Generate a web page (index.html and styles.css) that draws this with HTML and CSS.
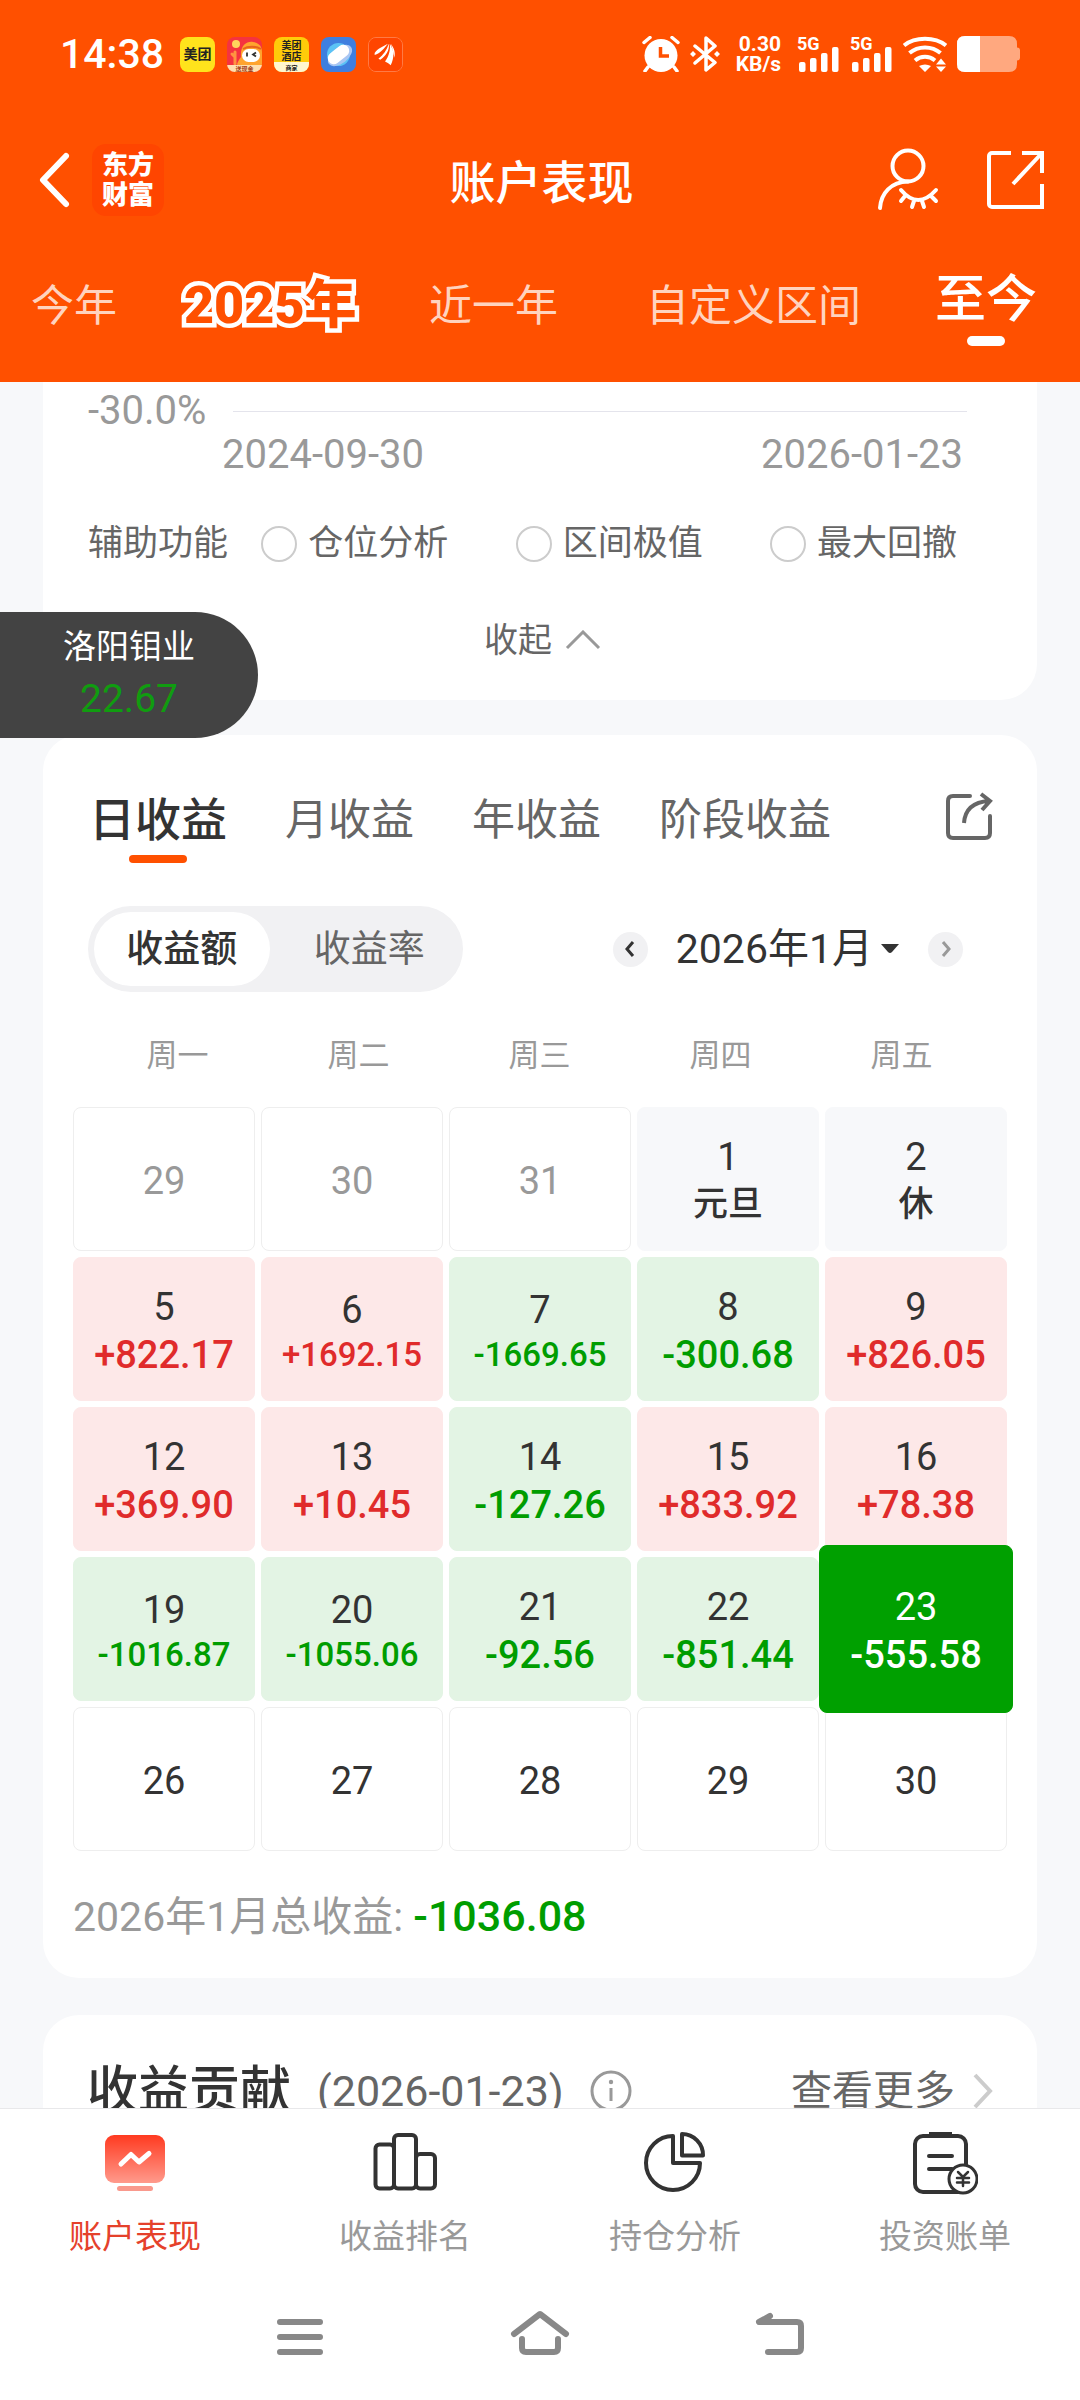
FILE: index.html
```html
<!DOCTYPE html>
<html lang="zh-CN">
<head>
<meta charset="utf-8">
<meta name="viewport" content="width=device-width, initial-scale=1">
<title>账户表现</title>
<link rel="stylesheet" href="styles.css">
</head>
<body>
<div class="app">
  <header class="header">
    <div class="status">
      <span class="clock">14:38</span>
      <div class="status-apps">
        <span class="app-icon app-meituan">美团</span>
        <svg class="app-icon" viewBox="0 0 35 35" aria-hidden="true">
          <rect width="35" height="35" fill="#f5333f"/>
          <path d="M14 20C13 8 20 4 26 5c7 1 9 5 9 10v14H10c0-4 2-6 4-9z" fill="#ffa42e"/>
          <path d="M16 12c5-3 13-3 18 0" fill="none" stroke="#e8641b" stroke-width="2"/>
          <circle cx="9" cy="7" r="4" fill="#ffd45c"/>
          <path d="M8 15v12M5 17l3 3" stroke="#ff9440" stroke-width="3" stroke-linecap="round"/>
          <rect x="15" y="12" width="18" height="13" rx="6.500" fill="#fff"/>
          <path d="M20 15.500v4M29 15.500l-3 2 3 2" fill="none" stroke="#333" stroke-width="1.800"/>
          <path d="M0 28h35v7H0z" fill="#ffe0b0"/>
          <text x="17.500" y="34" class="tiny-red">送现金</text>
        </svg>
        <span class="app-icon app-hotel"><span>美团</span><span>酒店</span><span class="app-hotel-foot">商家</span></span>
        <svg class="app-icon" viewBox="0 0 35 35" aria-hidden="true">
          <rect width="35" height="35" fill="#3f7fdf"/>
          <circle cx="17.500" cy="17.500" r="11.500" fill="#5cc3f5"/>
          <ellipse cx="19" cy="18.500" rx="14" ry="8" transform="rotate(-38 19 18.500)" fill="#a9c6f3"/>
          <rect x="5.500" y="11.500" width="24" height="12" rx="6" transform="rotate(-38 17.500 17.500)" fill="#fff"/>
        </svg>
        <svg class="app-icon app-outlined" viewBox="0 0 35 35" aria-hidden="true">
          <rect width="35" height="35" fill="#ff4500"/>
          <path d="M6 16C9 11 15 9 20 6 16 11 12 16 6 18zM10 22c5-4 9-9 11-16 1 7-3 13-9 17zM17 25c4-6 6-12 5-19 5 8 5 14 1 23-2-2-4-3-6-4zM23 6c4 5 5 9 4 15-1-5-2-10-4-15z" fill="#fff"/>
        </svg>
      </div>
      <div class="status-right">
        <svg width="38" height="36" viewBox="0 0 38 36" aria-label="闹钟">
          <circle cx="19" cy="19.500" r="16.500" fill="#fff"/>
          <path d="M2 6.500 8 1.500M36 6.500 30 1.500M6 31l-3 4M32 31l3 4" stroke="#fff" stroke-width="3.500" stroke-linecap="round"/>
          <path d="M18.500 11v9h8.500" fill="none" stroke="#ff5000" stroke-width="3.500"/>
        </svg>
        <svg width="30" height="36" viewBox="0 0 30 36" aria-label="蓝牙">
          <path d="M5 10 25 26.500 16 34V2l9 8L5 27" fill="none" stroke="#fff" stroke-width="3.500" stroke-linejoin="round" stroke-linecap="round"/>
          <path d="M0 18l3-3 3 3-3 3zM24 18l3-3 3 3-3 3z" fill="#fff"/>
        </svg>
        <div class="net-speed"><span>0.30</span><span>KB/s</span></div>
        <svg class="signal" width="43" height="36" viewBox="0 0 43 36" aria-label="信号">
          <text x="0" y="14" class="sig">5G</text>
          <g fill="#fff"><rect x="2" y="26" width="6.500" height="10" rx="2"/><rect x="13" y="22" width="6.500" height="14" rx="2"/><rect x="24" y="17" width="6.500" height="19" rx="2"/><rect x="35" y="11" width="6.500" height="25" rx="2"/></g>
        </svg>
        <svg class="signal" width="43" height="36" viewBox="0 0 43 36" aria-label="信号">
          <text x="0" y="14" class="sig">5G</text>
          <g fill="#fff"><rect x="2" y="26" width="6.500" height="10" rx="2"/><rect x="13" y="22" width="6.500" height="14" rx="2"/><rect x="24" y="17" width="6.500" height="19" rx="2"/><rect x="35" y="11" width="6.500" height="25" rx="2"/></g>
        </svg>
        <svg width="44" height="36" viewBox="0 0 44 36" aria-label="无线网络">
          <g fill="none" stroke="#fff" stroke-width="4"><path d="M1 9.500C12 .500 32 .500 43 9.500"/><path d="M6.500 17C15 9.500 29 9.500 37.500 17"/><path d="M12 24.500c6-5 14-5 20 0"/></g>
          <path d="M16 30q6-3 12 0l-6 6zM33 28.500l5-6 5 6zM33 30.500h10l-5 5.500z" fill="#fff"/>
        </svg>
        <svg width="63" height="36" viewBox="0 0 63 36" aria-label="电量">
          <path d="M8 0H52q8 0 8 8v3.500q3 0 3 3v7q0 3-3 3V28q0 8-8 8H8q-8 0-8-8V8Q0 0 8 0z" fill="#ffa87f"/>
          <path d="M8 0H23V36H8q-8 0-8-8V8Q0 0 8 0z" fill="#fff"/>
        </svg>
      </div>
    </div>

    <div class="title-row">
      <div class="title-left">
        <button class="icon-btn" aria-label="返回">
          <svg width="34" height="58" viewBox="0 0 34 58"><path d="M28 5 5 29 28 53" fill="none" stroke="#fff" stroke-width="6" stroke-linecap="round" stroke-linejoin="round"/></svg>
        </button>
        <span class="brand"><span>东方</span><span>财富</span></span>
      </div>
      <h1 class="title">账户表现</h1>
      <div class="title-right">
        <button class="icon-btn" aria-label="隐藏账户">
          <svg width="64" height="66" viewBox="0 0 64 66" fill="none" stroke="#fff" stroke-width="4" stroke-linecap="round"><circle cx="32" cy="19" r="15.500"/><path d="M4 61C5 46 15 35 32 34.500M25 43Q42 63 60 43M29 49l-4 5M38 54l-2 6M46 54l2 6M55 49l5 5"/></svg>
        </button>
        <button class="icon-btn" aria-label="分享">
          <svg width="60" height="62" viewBox="0 0 60 62" fill="none" stroke="#fff" stroke-width="4"><path d="M26 4H7a3 3 0 0 0-3 3V55a3 3 0 0 0 3 3H57V35M37 4H57V24M57 4 28 35"/></svg>
        </button>
      </div>
    </div>

    <nav class="ranges">
      <button class="range">今年</button>
      <button class="range range-art">2025年</button>
      <button class="range">近一年</button>
      <button class="range">自定义区间</button>
      <button class="range range-active">至今</button>
    </nav>
  </header>

  <main class="main">
    <section class="card chart-card">
      <div class="axis"><span>-30.0%</span><i class="axis-line"></i></div>
      <div class="dates"><span>2024-09-30</span><span>2026-01-23</span></div>
      <div class="aux">
        <span class="aux-title">辅助功能</span>
        <label class="aux-opt"><input type="radio" name="aux">仓位分析</label>
        <label class="aux-opt"><input type="radio" name="aux">区间极值</label>
        <label class="aux-opt"><input type="radio" name="aux">最大回撤</label>
      </div>
      <button class="collapse">收起
        <svg width="36" height="20" viewBox="0 0 36 20"><path d="M2 18 18 2 34 18" fill="none" stroke="#999" stroke-width="3"/></svg>
      </button>
    </section>

    <section class="card income-card">
      <div class="income-head">
        <div class="tabs">
          <button class="tab tab-active">日收益</button>
          <button class="tab">月收益</button>
          <button class="tab">年收益</button>
          <button class="tab">阶段收益</button>
        </div>
        <button class="icon-btn share" aria-label="分享收益">
          <svg width="50" height="50" viewBox="0 0 50 50" fill="none" stroke="#666" stroke-width="4"><path d="M26 4H9Q4 4 4 9V41q0 5 5 5H41q5 0 5-5V24" stroke-linecap="round"/><path d="M20 31C21 17 29 10 45 9M37 2l9 7-8 9"/></svg>
        </button>
      </div>

      <div class="controls">
        <div class="segment">
          <button class="seg seg-active">收益额</button>
          <button class="seg">收益率</button>
        </div>
        <div class="month">
          <button class="round" aria-label="上个月"><svg width="12" height="18" viewBox="0 0 12 18"><path d="M9 2 3 9l6 7" fill="none" stroke="#333" stroke-width="3"/></svg></button>
          <button class="month-name">2026年1月<svg width="20" height="10" viewBox="0 0 20 10"><path d="M1 0H19L12 8q-2 2-4 0z" fill="#333"/></svg></button>
          <button class="round" aria-label="下个月"><svg width="12" height="18" viewBox="0 0 12 18"><path d="M3 2l6 7-6 7" fill="none" stroke="#999" stroke-width="3"/></svg></button>
        </div>
      </div>

      <div class="weekdays"><span>周一</span><span>周二</span><span>周三</span><span>周四</span><span>周五</span></div>

      <div class="calendar">
        <button class="day out"><span>29</span></button>
        <button class="day out"><span>30</span></button>
        <button class="day out"><span>31</span></button>
        <button class="day rest"><span>1</span><span class="note">元旦</span></button>
        <button class="day rest"><span>2</span><span class="note">休</span></button>

        <button class="day up"><span>5</span><span class="amount">+822.17</span></button>
        <button class="day up"><span>6</span><span class="amount long">+1692.15</span></button>
        <button class="day down"><span>7</span><span class="amount long">-1669.65</span></button>
        <button class="day down"><span>8</span><span class="amount">-300.68</span></button>
        <button class="day up"><span>9</span><span class="amount">+826.05</span></button>

        <button class="day up"><span>12</span><span class="amount">+369.90</span></button>
        <button class="day up"><span>13</span><span class="amount">+10.45</span></button>
        <button class="day down"><span>14</span><span class="amount">-127.26</span></button>
        <button class="day up"><span>15</span><span class="amount">+833.92</span></button>
        <button class="day up"><span>16</span><span class="amount">+78.38</span></button>

        <button class="day down"><span>19</span><span class="amount long">-1016.87</span></button>
        <button class="day down"><span>20</span><span class="amount long">-1055.06</span></button>
        <button class="day down"><span>21</span><span class="amount">-92.56</span></button>
        <button class="day down"><span>22</span><span class="amount">-851.44</span></button>
        <button class="day selected"><span>23</span><span class="amount">-555.58</span></button>

        <button class="day"><span>26</span></button>
        <button class="day"><span>27</span></button>
        <button class="day"><span>28</span></button>
        <button class="day"><span>29</span></button>
        <button class="day"><span>30</span></button>
      </div>

      <p class="total">2026年1月总收益: <strong>-1036.08</strong></p>
    </section>

    <section class="card contrib-card">
      <h2 class="contrib-title">收益贡献</h2>
      <span class="contrib-date">(2026-01-23)</span>
      <svg width="42" height="42" viewBox="0 0 42 42" aria-label="说明"><circle cx="21" cy="21" r="19" fill="none" stroke="#999" stroke-width="3"/><path d="M21 18V31" stroke="#999" stroke-width="3"/><circle cx="21" cy="12" r="2.200" fill="#999"/></svg>
      <a class="more" href="#more">查看更多<svg width="22" height="36" viewBox="0 0 22 36"><path d="M3 2 18 18 3 34" fill="none" stroke="#ccc" stroke-width="4"/></svg></a>
    </section>
  </main>

  <footer class="footer">
    <nav class="bottom-nav">
      <a class="nav-item nav-active" href="#account">
        <svg width="64" height="62" viewBox="0 0 64 62"><defs><linearGradient id="screen" x1="0" y1="0" x2="0" y2="1"><stop offset="0" stop-color="#ff3a20"/><stop offset="1" stop-color="#ff9a8c"/></linearGradient></defs><rect x="2" y="4" width="60" height="48" rx="9" fill="url(#screen)"/><path d="M18 33 28 23.500 36 31 46 22.500" fill="none" stroke="#fff" stroke-width="5" stroke-linecap="round" stroke-linejoin="round"/><rect x="14" y="55" width="36" height="5" rx="2.500" fill="#f9998d"/></svg>
        账户表现
      </a>
      <a class="nav-item" href="#rank">
        <svg width="66" height="62" viewBox="0 0 66 62" fill="none" stroke="#333" stroke-width="4"><rect x="3.500" y="13.500" width="18.500" height="44" rx="4"/><rect x="22" y="4" width="22" height="53.500" rx="4"/><rect x="44" y="23" width="19" height="34.500" rx="4"/></svg>
        收益排名
      </a>
      <a class="nav-item" href="#position">
        <svg width="64" height="62" viewBox="0 0 64 62" fill="none" stroke="#333" stroke-width="4" stroke-linejoin="round"><path d="M30 5V32H57A27 27 0 1 1 30 5ZM39 3V24.500H60A21 21 0 0 0 39 3Z"/></svg>
        持仓分析
      </a>
      <a class="nav-item" href="#bill">
        <svg width="66" height="64" viewBox="0 0 66 64" fill="none" stroke="#333" stroke-width="4" stroke-linecap="round"><rect x="3" y="5" width="51" height="56" rx="8"/><path d="M17 1H40v5H17z" fill="#333" stroke="none"/><path d="M17 25H40M17 38H40"/><circle cx="51" cy="48" r="14" fill="#fff" stroke-width="3"/><path d="M46 41l5 5 5-5M51 46v9M45 47H57M45 51.500H57" stroke-width="2.500"/></svg>
        投资账单
      </a>
    </nav>
    <div class="system-nav">
      <button class="icon-btn" aria-label="最近任务"><svg width="64" height="60" viewBox="0 0 64 60"><path d="M12 16H52M12 31H52M12 46H52" stroke="#888" stroke-width="6" stroke-linecap="round"/></svg></button>
      <button class="icon-btn" aria-label="主页"><svg width="64" height="60" viewBox="0 0 64 60"><path d="M6 28 32 8 58 28M14 33V42q0 4 4 4H46q4 0 4-4V33" fill="none" stroke="#888" stroke-width="6" stroke-linecap="round" stroke-linejoin="round"/></svg></button>
      <button class="icon-btn" aria-label="后退"><svg width="64" height="60" viewBox="0 0 64 60"><path d="M22 10 11 16H49q4 0 4 4V42q0 4-4 4H20" fill="none" stroke="#888" stroke-width="6" stroke-linecap="round" stroke-linejoin="round"/></svg></button>
    </div>
  </footer>

  <aside class="ticker"><span>洛阳钼业</span><span class="ticker-price">22.67</span></aside>
</div>
</body>
</html>
```
FILE: styles.css
```css
* { box-sizing: border-box; }

body {
  margin: 0;
  font-family: Roboto, "Noto Sans CJK SC", sans-serif;
  color: #333;
  background: #f7f8fa;
}

button {
  margin: 0;
  padding: 0;
  border: 0;
  background: none;
  font: inherit;
  color: inherit;
}

a { color: inherit; text-decoration: none; }
svg { display: block; flex: none; }
h1, h2, p { margin: 0; }

.app {
  position: relative;
  display: flex;
  flex-direction: column;
  height: 100vh;
}

/* Header */
.header {
  flex: none;
  padding-top: 36px;
  background: #ff5000;
  color: #fff;
}

.status {
  display: flex;
  align-items: center;
  height: 36px;
  padding: 0 60px;
}

.clock { font-size: 41px; font-weight: 500; line-height: 36px; }

.status-apps { display: flex; gap: 12px; margin-left: 16px; }

.app-icon {
  display: flex;
  flex-direction: column;
  align-items: center;
  width: 35px;
  height: 35px;
  border-radius: 8px;
  overflow: hidden;
  color: #222;
}

.app-outlined { border: 1px solid #ff7a45; }

.app-meituan {
  background: #ffe31c;
  font-size: 14px;
  font-weight: 700;
  line-height: 35px;
}

.app-hotel {
  background: #ffcc0a;
  font-size: 10px;
  font-weight: 700;
  line-height: 11px;
  padding-top: 3px;
}

.app-hotel-foot {
  width: 100%;
  background: #fff6cf;
  font-size: 6px;
  text-align: center;
}

.tiny-red { font-size: 6px; font-weight: 700; fill: #a3401a; text-anchor: middle; }

.status-right { display: flex; align-items: center; gap: 10px; margin-left: auto; }

.net-speed {
  display: flex;
  flex-direction: column;
  align-items: flex-end;
  margin: 0 6px;
  font-size: 21px;
  font-weight: 700;
  line-height: 20px;
}

.signal { overflow: visible; }
.sig { font-size: 18px; font-weight: 700; fill: #fff; }

.title-row {
  display: grid;
  grid-template-columns: 1fr auto 1fr;
  align-items: center;
  height: 72px;
  margin-top: 72px;
  padding: 0 35px 0 38px;
}

.title-left, .title-right { display: flex; align-items: center; }
.title-left { gap: 20px; }
.title-right { justify-content: flex-end; gap: 45px; }

.brand {
  display: flex;
  flex-direction: column;
  justify-content: center;
  align-items: center;
  width: 72px;
  height: 72px;
  border-radius: 14px;
  background: #ff4500;
  font-size: 26px;
  font-weight: 900;
  line-height: 30px;
}

.title { padding-top: 6px; font-size: 46px; font-weight: 500; line-height: 60px; }

.ranges {
  display: grid;
  grid-template-columns: 149fr 249fr 217fr 289fr 102fr;
  justify-items: start;
  align-items: start;
  height: 166px;
  padding: 54px 43px 0 31px;
}

.range { font-size: 43px; line-height: 72px; color: #ffd3bf; white-space: nowrap; }

.range-art {
  padding: 0 4px;
  font-size: 52px;
  font-weight: 900;
  color: #ff5000;
  -webkit-text-stroke: 9px #fff;
  paint-order: stroke fill;
}

.range-active {
  display: flex;
  flex-direction: column;
  align-items: center;
  font-size: 51px;
  font-weight: 500;
  line-height: 60px;
  color: #fff;
}

.range-active::after {
  content: "";
  width: 38px;
  height: 10px;
  margin-top: 6px;
  border-radius: 5px;
  background: #fff;
}

/* Content */
.main {
  flex: 1;
  min-height: 0;
  padding: 0 43px;
  overflow-y: auto;
  scrollbar-width: none;
}

.card { background: #fff; border-radius: 36px; }

.chart-card {
  padding: 7px 70px 36px 45px;
  border-radius: 0 0 36px 36px;
}

.axis {
  display: flex;
  align-items: center;
  gap: 27px;
  font-size: 40px;
  line-height: 44px;
  color: #999;
}

.axis-line { flex: 1; height: 1px; background: #e4e4ec; }

.dates {
  display: flex;
  justify-content: space-between;
  padding: 0 4px 0 134px;
  font-size: 40px;
  line-height: 44px;
  color: #999;
}

.aux {
  display: flex;
  align-items: center;
  justify-content: space-between;
  margin-top: 43px;
  padding-right: 10px;
  font-size: 35px;
  line-height: 48px;
  color: #666;
}

.aux-title { margin-right: -34px; }
.aux-opt { display: flex; align-items: center; gap: 11px; }

.aux-opt input {
  appearance: none;
  width: 36px;
  height: 36px;
  margin: 0;
  border: 2px solid #ccc;
  border-radius: 50%;
}

.collapse {
  display: flex;
  align-items: center;
  gap: 13px;
  margin: 48px 0 0 396px;
  font-size: 34px;
  line-height: 48px;
  color: #666;
}

.income-card { margin-top: 35px; padding: 55px 30px 31px; }

.income-head {
  display: flex;
  justify-content: space-between;
  align-items: flex-start;
  padding: 0 13px 0 16px;
}

.tabs { display: flex; gap: 58px; }
.tab { font-size: 43px; line-height: 60px; color: #666; align-self: flex-start; }

.tab-active {
  display: flex;
  flex-direction: column;
  align-items: center;
  font-size: 46px;
  font-weight: 500;
  color: #333;
}

.tab-active::after {
  content: "";
  width: 58px;
  height: 8px;
  margin-top: 5px;
  border-radius: 4px;
  background: #ff5000;
}

.share { margin-top: 2px; }

.controls {
  display: flex;
  justify-content: space-between;
  align-items: center;
  margin-top: 43px;
  padding: 0 44px 0 15px;
}

.segment {
  display: grid;
  grid-template-columns: 1fr 1fr;
  gap: 12px;
  width: 375px;
  padding: 6px;
  border-radius: 43px;
  background: #f1f1f3;
}

.seg { padding-top: 2px; border-radius: 37px; font-size: 37px; line-height: 72px; color: #666; }
.seg-active { background: #fff; color: #333; font-weight: 500; }

.month { display: flex; align-items: center; gap: 28px; }

.month-name {
  display: flex;
  align-items: center;
  gap: 7px;
  font-size: 41px;
  line-height: 60px;
}

.round {
  display: flex;
  align-items: center;
  justify-content: center;
  width: 35px;
  height: 35px;
  border-radius: 50%;
  background: #f1f1f3;
}

.weekdays {
  display: grid;
  grid-template-columns: repeat(5, 1fr);
  margin: 42px 15px 0 14px;
  font-size: 31px;
  line-height: 44px;
  color: #999;
  text-align: center;
}

.calendar {
  display: grid;
  grid-template-columns: repeat(5, 1fr);
  grid-auto-rows: 144px;
  gap: 6px;
  margin-top: 29px;
}

.day {
  display: flex;
  flex-direction: column;
  align-items: center;
  justify-content: center;
  padding-top: 4px;
  border: 1px solid #eee;
  border-radius: 8px;
  font-size: 38px;
  font-weight: 450;
  line-height: 48px;
  background: #fff;
}

.out { color: #999; }
.rest { background: #f7f8fa; border-color: #f7f8fa; }
.up { background: #fde8e8; border-color: #fde8e8; }
.up .amount { color: #e02b2b; }
.down { background: #e3f4e4; border-color: #e3f4e4; }
.down .amount { color: #009d00; }
.amount { font-weight: 500; }
.note { font-size: 35px; font-weight: 500; }
.long { font-size: 33px; line-height: 42px; }

.selected {
  z-index: 1;
  margin: -12px -6px;
  border-color: #00a000;
  background: #00a000;
  color: #fff;
}

.total {
  margin-top: 35px;
  font-size: 41px;
  line-height: 60px;
  color: #999;
}

.total strong { font-size: 43px; font-weight: 500; color: #009d00; }

.contrib-card {
  display: flex;
  align-items: center;
  margin-top: 37px;
  padding: 44px 43px 44px 44px;
}

.contrib-title { font-size: 51px; font-weight: 500; line-height: 64px; }
.contrib-date { margin: 0 26px; font-size: 43px; line-height: 64px; color: #666; }

.more {
  display: flex;
  align-items: center;
  gap: 17px;
  margin-left: auto;
  font-size: 41px;
  line-height: 64px;
  color: #666;
}

/* Bottom bars */
.footer { flex: none; border-top: 1px solid #e8e8ea; background: #fff; }

.bottom-nav {
  display: grid;
  grid-template-columns: repeat(4, 1fr);
  padding-top: 22px;
}

.nav-item {
  display: flex;
  flex-direction: column;
  align-items: center;
  justify-content: space-between;
  height: 126px;
  font-size: 33px;
  line-height: 40px;
  color: #999;
}

.nav-active { color: #e5412b; }

.system-nav {
  display: flex;
  justify-content: center;
  gap: 176px;
  padding: 49px 0 34px;
}

/* Floating quote */
.ticker {
  position: absolute;
  top: 612px;
  left: 0;
  display: flex;
  flex-direction: column;
  align-items: center;
  width: 258px;
  padding: 9px 0 13px;
  border-radius: 0 63px 63px 0;
  background: #434343;
  color: #fff;
  font-size: 33px;
  line-height: 52px;
}

.ticker-price { font-size: 39px; color: #109c10; }
```
